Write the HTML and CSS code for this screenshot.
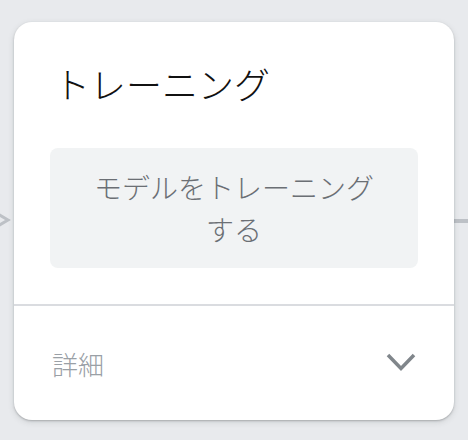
FILE: index.html
```html
<!DOCTYPE html>
<html lang="ja">
<head>
  <meta charset="UTF-8" />
  <meta name="viewport" content="width=device-width, initial-scale=1.0"/>
  <title>トレーニング</title>
  <link rel="stylesheet" href="styles.css">
</head>
<body>

<div class="canvas">
  <!-- connector lines behind the card -->
  <svg class="arrow-in" width="14" height="16" viewBox="0 0 14 16">
    <polyline points="0,2 10,8 0,14" fill="none" stroke="#bdc1c6" stroke-width="3"/>
  </svg>
  <div class="line-out"></div>

  <div class="card">
    <div class="card-body">
      <h2 class="card-title">トレーニング</h2>
      <button class="action">モデルをトレーニングする</button>
    </div>

    <div class="card-footer">
      <span class="details">詳細</span>
      <svg class="chevron" width="30" height="20" viewBox="0 0 30 20">
        <polyline points="2,2 15,15.5 28,2" fill="none" stroke="#80868b" stroke-width="3.5"/>
      </svg>
    </div>
  </div>
</div>

</body>
</html>
```

FILE: styles.css
```css
*{
  margin:0;
  padding:0;
  box-sizing:border-box;
  font-family:"Noto Sans CJK JP", "Noto Sans", sans-serif;
}

body{
  background:#e8eaed;
  width:468px;
  height:440px;
  overflow:hidden;
}

.canvas{
  position:relative;
  padding:22px 14px 0 14px;
}

.arrow-in{
  position:absolute;
  left:-2px;
  top:212px;
}

.line-out{
  position:absolute;
  left:450px;
  right:0;
  top:219px;
  height:4px;
  background:#bdc1c6;
}

.card{
  position:relative;
  width:440px;
  height:398px;
  background:white;
  border-radius:18px;
  box-shadow:0 1px 2px rgba(60,64,67,0.3), 0 2px 6px rgba(60,64,67,0.15);
  display:flex;
  flex-direction:column;
}

.card-body{
  padding:36px 36px 36px 36px;
  border-bottom:2px solid #dadce0;
}

.card-title{
  font-size:36px;
  font-weight:300;
  color:#111;
  line-height:50px;
  padding-left:4px;
  margin-bottom:40px;
}

.action{
  width:100%;
  height:120px;
  background:#f1f3f4;
  border:none;
  border-radius:8px;
  color:#6b6f74;
  font-size:28px;
  font-weight:300;
  line-height:42px;
  padding:0 40px;
}

.card-footer{
  flex:1;
  display:flex;
  align-items:center;
  justify-content:space-between;
  padding:0 38px 0 38px;
}

.details{
  font-size:26px;
  font-weight:300;
  color:#9aa0a6;
}

.chevron{
  display:block;
}
```
